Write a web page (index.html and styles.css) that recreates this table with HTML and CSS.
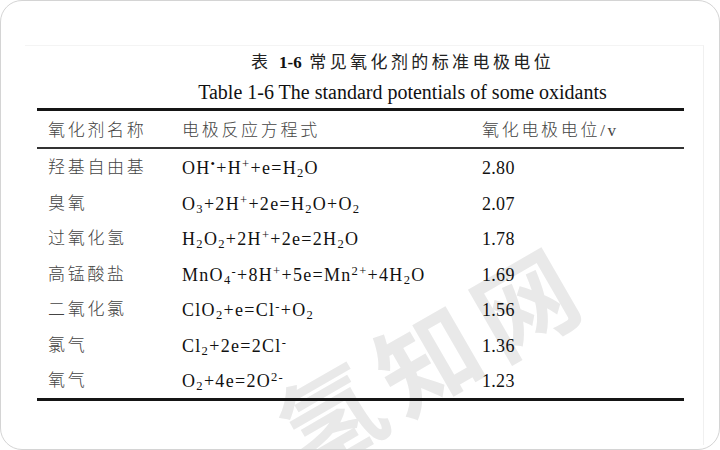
FILE: index.html
```html
<!DOCTYPE html>
<html lang="zh-CN">
<head>
  <meta charset="UTF-8">
  <title>常见氧化剂的标准电极电位</title>
  <link rel="stylesheet" href="styles.css">
</head>
<body>
  <div class="card">
    <div class="sheet">
      <div class="caption">
        <p class="caption-cn">表 <b>1-6</b> 常见氧化剂的标准电极电位</p>
        <p class="caption-en">Table 1-6 The standard potentials of some oxidants</p>
      </div>

      <table class="potentials">
        <thead>
          <tr>
            <th class="col-name">氧化剂名称</th>
            <th class="col-eq">电极反应方程式</th>
            <th class="col-val">氧化电极电位/v</th>
          </tr>
        </thead>
        <tbody>
          <tr>
            <td class="col-name">羟基自由基</td>
            <td class="col-eq">OH<sup>•</sup>+H<sup>+</sup>+e=H<sub>2</sub>O</td>
            <td class="col-val">2.80</td>
          </tr>
          <tr>
            <td class="col-name">臭氧</td>
            <td class="col-eq">O<sub>3</sub>+2H<sup>+</sup>+2e=H<sub>2</sub>O+O<sub>2</sub></td>
            <td class="col-val">2.07</td>
          </tr>
          <tr>
            <td class="col-name">过氧化氢</td>
            <td class="col-eq">H<sub>2</sub>O<sub>2</sub>+2H<sup>+</sup>+2e=2H<sub>2</sub>O</td>
            <td class="col-val">1.78</td>
          </tr>
          <tr>
            <td class="col-name">高锰酸盐</td>
            <td class="col-eq">MnO<sub>4</sub><sup>-</sup>+8H<sup>+</sup>+5e=Mn<sup>2+</sup>+4H<sub>2</sub>O</td>
            <td class="col-val">1.69</td>
          </tr>
          <tr>
            <td class="col-name">二氧化氯</td>
            <td class="col-eq">ClO<sub>2</sub>+e=Cl<sup>-</sup>+O<sub>2</sub></td>
            <td class="col-val">1.56</td>
          </tr>
          <tr>
            <td class="col-name">氯气</td>
            <td class="col-eq">Cl<sub>2</sub>+2e=2Cl<sup>-</sup></td>
            <td class="col-val">1.36</td>
          </tr>
          <tr>
            <td class="col-name">氧气</td>
            <td class="col-eq">O<sub>2</sub>+4e=2O<sup>2-</sup></td>
            <td class="col-val">1.23</td>
          </tr>
        </tbody>
      </table>
    </div>

    <div class="watermark">氢知网</div>
  </div>
</body>
</html>
```

FILE: styles.css
```css
body {
  margin: 0;
  background: #ffffff;
  font-family: "Liberation Serif", "Noto Sans CJK SC", serif;
  color: #111111;
}

.card {
  position: relative;
  height: 450px;
  box-sizing: border-box;
  border: 1px solid #d4d4d4;
  border-radius: 22px;
  padding: 44px 0 0 24px;
  overflow: hidden;
  background: #ffffff;
}

.sheet {
  position: relative;
  z-index: 1;
  width: 679px;
  height: 400px;
  box-sizing: border-box;
  border-top: 1px solid #f4f4f4;
  border-right: 1px solid #f0f0f0;
  padding: 0 19px 0 12px;
}

.caption {
  padding-left: 84px;
  text-align: center;
}

.caption p {
  margin: 0;
}

.caption-cn {
  margin-top: 2px !important;
  font-size: 17px;
  line-height: 30px;
  letter-spacing: 3.4px;
  color: #222222;
  font-weight: 400;
}

.caption-cn b {
  font-weight: bold;
  letter-spacing: 0;
  color: #111111;
}

.caption-en {
  font-size: 20px;
  line-height: 28px;
  color: #111111;
}

.potentials {
  width: 647px;
  margin-top: 2px;
  border-collapse: separate;
  border-spacing: 0;
  text-align: left;
}

.potentials th,
.potentials td {
  padding: 0;
  white-space: nowrap;
}

.potentials th {
  font-weight: 300;
  padding-top: 3px;
  line-height: 33px;
  border-top: 3px solid #151515;
  border-bottom: 2px solid #333333;
  font-size: 17px;
  letter-spacing: 2.7px;
  color: #444444;
}

.potentials td {
  padding-top: 3px;
  line-height: 32.5px;
  font-size: 18px;
}

.potentials tbody tr:last-child td {
  border-bottom: 3px solid #151515;
}

.col-name {
  width: 134px;
  padding-left: 11px !important;
}

.col-eq {
  width: 300px;
}

td.col-name {
  font-size: 17px !important;
  font-weight: 300;
  letter-spacing: 2.7px;
  color: #444444;
}

td.col-eq {
  letter-spacing: 1.3px;
}

td.col-val {
  letter-spacing: 0.3px;
}

sup,
sub {
  font-size: 0.7em;
  line-height: 0;
}

sup {
  vertical-align: 0.5em;
}

sub {
  vertical-align: -0.25em;
}

.watermark {
  position: absolute;
  left: 262px;
  top: 302px;
  z-index: 0;
  font-family: "Noto Sans CJK SC", sans-serif;
  font-weight: bold;
  font-size: 100px;
  line-height: 1;
  letter-spacing: 12px;
  color: #e9e9e9;
  transform: rotate(-30deg);
}
```
